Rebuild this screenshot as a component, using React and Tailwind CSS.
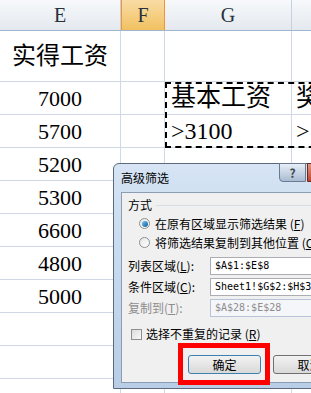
import React from "react";

const serif = { fontFamily: '"Liberation Serif", "Noto Sans CJK SC", serif' };
const ui = { fontFamily: '"Noto Sans CJK SC", "Liberation Sans", sans-serif' };
const mono = { fontFamily: '"DejaVu Sans Mono", "Liberation Mono", monospace' };

const amounts = ["7000", "5700", "5200", "5300", "6600", "4800", "5000", "", "", ""];

const Row = ({ h, e, g, hCol, eClass = "text-[22px]" }) => (
    <div className={`flex ${h} border-b border-[#d0d7e5]`}>
        <div className={`w-[121px] shrink-0 flex items-center justify-center border-r border-[#d0d7e5] ${eClass}`} style={serif}>
            {e}
        </div>
        <div className="w-[44px] shrink-0 border-r border-[#d0d7e5]" />
        <div className="w-[127px] shrink-0 flex items-center pl-[6px] border-r border-[#d0d7e5] text-[25px]" style={serif}>
            {g}
        </div>
        <div className="flex-1 flex items-center pl-[4px] text-[25px]" style={serif}>
            {hCol}
        </div>
    </div>
);

const SheetPart = () => (
    <div className="flex flex-col">
        <div className="flex h-[31px] border-b border-[#9eb6ce] text-[20px] text-[#27313d]" style={serif}>
            <div className="w-[121px] shrink-0 flex items-center justify-center bg-gradient-to-b from-[#f7f9fb] to-[#e4e9ef] border-r border-[#c5d1de]">E</div>
            <div className="w-[44px] shrink-0 flex items-center justify-center bg-gradient-to-b from-[#f9dca4] to-[#f1c15e] border-x border-[#f29436]">F</div>
            <div className="w-[127px] shrink-0 flex items-center justify-center bg-gradient-to-b from-[#f7f9fb] to-[#e4e9ef] border-r border-[#c5d1de]">G</div>
            <div className="flex-1 bg-gradient-to-b from-[#f7f9fb] to-[#e4e9ef]" />
        </div>
        <Row h="h-[51px]" e="实得工资" eClass="text-[24px]" />
        {amounts.map((a, i) => (
            <Row
                key={i}
                h="h-[33px]"
                e={a}
                g={i === 0 ? "基本工资" : i === 1 ? <span className="text-[24px]">&gt;3100</span> : ""}
                hCol={i === 0 ? "奖" : i === 1 ? <span className="text-[24px]">&gt;</span> : ""}
            />
        ))}
    </div>
);

const Radio = ({ checked }) => (
    <span className="w-[11px] h-[11px] rounded-full border border-[#8e8f8f] bg-gradient-to-br from-[#e6e6e6] to-[#ffffff] flex items-center justify-center shrink-0">
        {checked && <span className="w-[6px] h-[6px] rounded-full bg-gradient-to-br from-[#6fc6f5] to-[#0d5c93]" />}
    </span>
);

const Field = ({ label, value, disabled, caret }) => (
    <div className="flex items-center h-[21px]">
        <span className={`w-[82px] shrink-0 ${disabled ? "text-[#8d8d8d]" : "text-black"}`}>{label}</span>
        <div
            className={`flex-1 h-[18px] flex items-center pl-[4px] border text-[10px] whitespace-nowrap ${disabled ? "bg-[#f4f6f9] border-[#b5c4d8] text-[#8d8d8d]" : "bg-white border-[#abadb3] text-black"}`}
            style={mono}
        >
            {value}
            {caret && <span className="w-px h-[13px] bg-black" />}
        </div>
    </div>
);

const Dialog = () => (
    <div className="absolute left-[113px] top-[163px] w-[260px] h-[226px] rounded-t-[6px] border border-[#5b6b7d] bg-gradient-to-b from-[#d6e4f4] via-[#c5d8ee] to-[#b9cde6] flex flex-col text-[12px]" style={ui}>
        <div className="h-[28px] shrink-0 flex items-start relative">
            <span className="mt-[7px] ml-[7px] leading-[14px] text-black">高级筛选</span>
            <div className="absolute left-[165px] top-[-1px] w-[27px] h-[19px] rounded-bl-[4px] border border-[#6a7b91] bg-gradient-to-b from-[#e7eef7] to-[#aabcd3] flex items-center justify-center text-[12px] font-bold text-[#3d4650]">?</div>
            <div className="absolute left-[193px] top-[-1px] w-[44px] h-[19px] rounded-br-[4px] border border-[#6a2a22] bg-gradient-to-b from-[#e39784] to-[#c0412a]" />
        </div>
        <div className="mx-[7px] flex-1 mb-[5px] bg-[#f0f0f0] border border-[#8b9db5] flex flex-col pl-[6px] pr-[10px] pt-[3px]">
            <div className="flex items-center h-[18px]">
                <span>方式</span>
                <span className="flex-1 ml-[4px] h-px bg-[#d5dfe5]" />
            </div>
            <div className="flex items-center h-[19px] pl-[11px] gap-[5px]">
                <Radio checked />
                <span className="whitespace-nowrap">在原有区域显示筛选结果 (<u>F</u>)</span>
            </div>
            <div className="flex items-center h-[19px] pl-[11px] gap-[5px]">
                <Radio />
                <span className="whitespace-nowrap">将筛选结果复制到其他位置 (<u>O</u>)</span>
            </div>
            <div className="flex flex-col mt-[3px]">
                <Field label={<>列表区域(<u>L</u>):</>} value="$A$1:$E$8" />
                <Field label={<>条件区域(<u>C</u>):</>} value="Sheet1!$G$2:$H$3" caret />
                <Field label={<>复制到(<u>T</u>):</>} value="$A$28:$E$28" disabled />
            </div>
            <div className="flex items-center h-[18px] mt-[7px] pl-[3px] gap-[4px]">
                <span className="w-[11px] h-[11px] border border-[#8e8f8f] bg-gradient-to-br from-[#dcdcdc] to-[#f8f8f8]" />
                <span className="whitespace-nowrap">选择不重复的记录 (<u>R</u>)</span>
            </div>
            <div className="flex items-center mt-[12px] pl-[60px] gap-[12px]">
                <div className="relative w-[73px] h-[19px] shrink-0 rounded-[3px] border border-[#3c7fb1] bg-gradient-to-b from-[#f2f2f2] to-[#d9d9d9] flex items-center justify-center">
                    确定
                    <span className="absolute left-[-11px] top-[-13px] w-[92px] h-[42px] border-[5px] border-[#ff0000]" />
                </div>
                <div className="w-[73px] h-[19px] shrink-0 rounded-[3px] border border-[#707070] bg-gradient-to-b from-[#f2f2f2] to-[#d9d9d9] flex items-center justify-center">
                    取消
                </div>
            </div>
        </div>
    </div>
);

export default function App() {
    return (
        <div className="relative w-[311px] h-[393px] overflow-hidden bg-white">
            <SheetPart />
            <div className="absolute left-[165px] top-[82px] w-[160px] h-[66px] border-2 border-dashed border-black" />
            <Dialog />
        </div>
    );
}
